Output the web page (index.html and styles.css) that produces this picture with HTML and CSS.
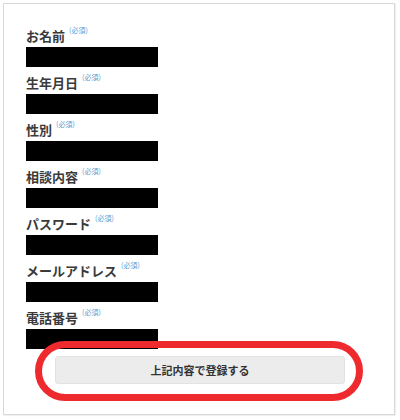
FILE: index.html
```html
<!DOCTYPE html>
<html>
<head>
  <meta charset="utf-8">
  <title>登録フォーム</title>
  <link rel="stylesheet" href="styles.css">
</head>
<body>
  <div class="card">
    <div class="field">
      <div class="label">お名前<span class="req">(必須)</span></div>
      <div class="input"></div>
    </div>
    <div class="field">
      <div class="label">生年月日<span class="req">(必須)</span></div>
      <div class="input"></div>
    </div>
    <div class="field">
      <div class="label">性別<span class="req">(必須)</span></div>
      <div class="input"></div>
    </div>
    <div class="field">
      <div class="label">相談内容<span class="req">(必須)</span></div>
      <div class="input"></div>
    </div>
    <div class="field">
      <div class="label">パスワード<span class="req">(必須)</span></div>
      <div class="input"></div>
    </div>
    <div class="field">
      <div class="label">メールアドレス<span class="req">(必須)</span></div>
      <div class="input"></div>
    </div>
    <div class="field">
      <div class="label">電話番号<span class="req">(必須)</span></div>
      <div class="input"></div>
    </div>

    <button class="submit">上記内容で登録する</button>

    <!-- red annotation ring around the submit button -->
    <div class="highlight"></div>
  </div>
</body>
</html>
```

FILE: styles.css
```css
/* Registration form screenshot */
body {
  margin: 0;
  padding: 3px;
  background: #fff;
  font-family: "Noto Sans CJK JP", "Noto Sans", sans-serif;
  color: #333;
}

.card {
  position: relative;
  width: 392px;
  border: 1px solid #d8d8d8;
  box-shadow: 1px 1px 1px rgba(0, 0, 0, 0.06);
  padding: 23px 0 30px 22px;
  box-sizing: border-box;
}

.field {
  margin-bottom: 7px;
}

.label {
  height: 18px;
  font-size: 13px;
  font-weight: 700;
  line-height: 18px;
  color: #3a3a3a;
}

.req {
  font-size: 7px;
  font-weight: 400;
  line-height: 0;
  color: #5a9bd0;
  margin-left: 4px;
  vertical-align: 8px;
}

.input {
  width: 132px;
  height: 20px;
  margin-top: 2px;
  background: #000;
}

.submit {
  display: block;
  width: 290px;
  height: 28px;
  margin: 0 0 0 29px;
  padding: 0;
  background: #ececec;
  border: 1px solid #e2e2e2;
  border-radius: 3px;
  font-family: inherit;
  font-size: 11px;
  font-weight: 700;
  color: #333;
}

.highlight {
  position: absolute;
  left: 31px;
  top: 337px;
  width: 328px;
  height: 60px;
  box-sizing: border-box;
  border: 7px solid #ee2a2f;
  border-radius: 30px;
}
```
